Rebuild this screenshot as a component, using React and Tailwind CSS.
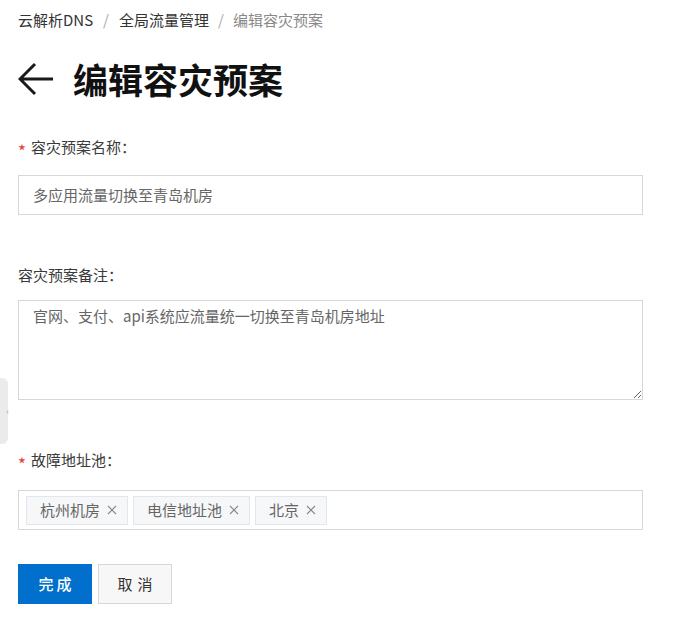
import React from 'react'

const font = { fontFamily: '"Noto Sans CJK SC", "Liberation Sans", sans-serif' }

function Label({ required, children }) {
    return (
        <div className="flex items-center h-5 text-[15px] leading-5 text-[#3a3a3a]">
            {required && <span className="text-[#e4393c] text-[17px] w-[13px] translate-y-[4px]">*</span>}
            <span>{children}</span>
        </div>
    )
}

function Tag({ label }) {
    return (
        <span className="flex items-center h-[29px] pl-[13px] pr-[10px] gap-[7px] bg-[#f6f7f8] border border-[#e3e6ea] text-[15px] text-[#666]">
            {label}
            <svg width="10" height="10" viewBox="0 0 10 10" className="text-[#888]">
                <path d="M1 1L9 9M9 1L1 9" stroke="currentColor" strokeWidth="1.1" />
            </svg>
        </span>
    )
}

export default function App() {
    return (
        <div className="relative min-h-[630px] w-full bg-white" style={font}>
            {/* collapsed side handle */}
            <div className="absolute left-0 top-[378px] w-[8px] h-[66px] bg-[#ebebeb] rounded-r-[6px] flex items-center justify-end">
                <span className="text-[9px] leading-none text-[#aaa] mr-[-1px]">‹</span>
            </div>

            <div className="pl-[18px] pt-[10px] w-[643px]">
                {/* breadcrumb */}
                <div className="flex items-center h-5 text-[15px] leading-5">
                    <span className="text-[#333]">云解析DNS</span>
                    <span className="text-[#aaa] mx-[10px]">/</span>
                    <span className="text-[#333]">全局流量管理</span>
                    <span className="text-[#aaa] mx-[9px]">/</span>
                    <span className="text-[#888]">编辑容灾预案</span>
                </div>

                {/* title */}
                <div className="flex items-center h-[44px] mt-[27px]">
                    <svg width="36" height="34" viewBox="0 0 36 34" className="text-[#1a1a1a]">
                        <path d="M2 17H35M17 2L2 17L17 32" fill="none" stroke="currentColor" strokeWidth="3" />
                    </svg>
                    <h1 className="ml-[19px] text-[35px] leading-[44px] font-bold text-[#111]">编辑容灾预案</h1>
                </div>

                <div className="mt-[36px]">
                    <Label required>容灾预案名称：</Label>
                    <div className="mt-[18px] h-[40px] border border-[#d7d7d7] flex items-center px-[14px] text-[15px] text-[#666]">
                        多应用流量切换至青岛机房
                    </div>
                </div>

                <div className="mt-[50px]">
                    <Label>容灾预案备注：</Label>
                    <textarea
                        className="block mt-[15px] w-full h-[100px] border border-[#d7d7d7] px-[14px] pt-[5px] pb-[8px] text-[15px] leading-5 text-[#666] outline-none resize-y"
                        style={font}
                        defaultValue="官网、支付、api系统应流量统一切换至青岛机房地址"
                    />
                </div>

                <div className="mt-[50px]">
                    <Label required>故障地址池：</Label>
                    <div className="mt-[20px] h-[40px] border border-[#d7d7d7] flex items-center px-[7px] gap-[5px]">
                        <Tag label="杭州机房" />
                        <Tag label="电信地址池" />
                        <Tag label="北京" />
                    </div>
                </div>

                <div className="flex gap-[6px] mt-[34px]">
                    <button className="w-[74px] h-[40px] bg-[#0070cc] text-white text-[15px] font-medium tracking-[3px] pl-[3px]">完成</button>
                    <button className="w-[74px] h-[40px] bg-[#f7f7f7] border border-[#d7d7d7] text-[#333] text-[15px] tracking-[5px] pl-[5px]">取消</button>
                </div>
            </div>
        </div>
    )
}
